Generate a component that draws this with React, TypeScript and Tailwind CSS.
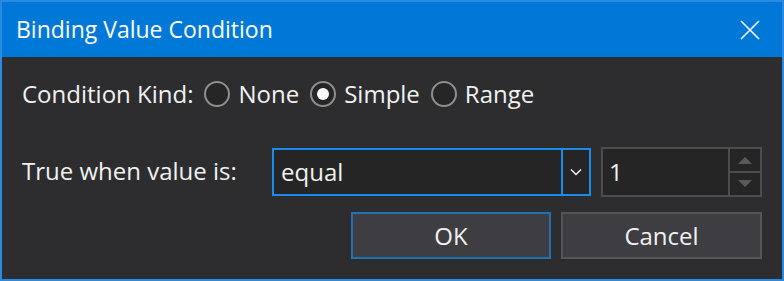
import { useState } from "react";

function Radio({ label, checked, onClick }: { label: string; checked: boolean; onClick: () => void }) {
  return (
    <button type="button" onClick={onClick} className="flex items-center gap-[8px] mr-[11px]">
      <span className="w-[26px] h-[26px] rounded-full border-2 border-[#8e8e8e] bg-[#262626] flex items-center justify-center">
        {checked && <span className="w-[12px] h-[12px] rounded-full bg-white" />}
      </span>
      <span>{label}</span>
    </button>
  );
}

export default function App() {
  const [kind, setKind] = useState("Simple");

  return (
    <div
      className="w-[784px] h-[281px] flex flex-col border-2 border-[#2a8ae0] bg-[#2d2d30] text-[#f1f1f1] overflow-hidden"
      style={{ fontFamily: '"Open Sans", "Noto Sans", sans-serif' }}
    >
      {/* Title bar */}
      <div className="h-[55px] shrink-0 bg-[#0078d7] flex items-center justify-between pl-[14px] pr-[22px]">
        <span className="text-[23px] text-white">Binding Value Condition</span>
        <svg width="20" height="20" viewBox="0 0 20 20" className="text-white">
          <path d="M1 1 L19 19 M19 1 L1 19" stroke="currentColor" strokeWidth="1.6" fill="none" />
        </svg>
      </div>

      {/* Body */}
      <div className="flex-1 flex flex-col px-[20px] pt-[14px] text-[24px]">
        <div className="h-[46px] flex items-center">
          <span className="mr-[11px]">Condition Kind:</span>
          {["None", "Simple", "Range"].map((k) => (
            <Radio key={k} label={k} checked={kind === k} onClick={() => setKind(k)} />
          ))}
        </div>

        <div className="mt-[30px] flex items-center gap-[10px]">
          <span className="w-[240px] -mt-[2px]">True when value is:</span>
          <div className="w-[319px] h-[48px] border-2 border-[#1a8cf0] bg-[#252526] flex">
            <span className="flex-1 flex items-center pl-[7px]">equal</span>
            <span className="w-[28px] border-l-2 border-[#1a8cf0] flex items-center justify-center">
              <svg width="12" height="8" viewBox="0 0 12 8">
                <path d="M1 1.5 L6 6.5 L11 1.5" stroke="#f1f1f1" strokeWidth="1.5" fill="none" />
              </svg>
            </span>
          </div>
          <div className="flex-1 h-[50px] border-2 border-[#4d4d4f] bg-[#252526] flex">
            <span className="flex-1 flex items-center pl-[6px]">1</span>
            <div className="w-[32px] border-l-2 border-[#4d4d4f] flex flex-col">
              <span className="flex-1 flex items-center justify-center border-b-2 border-[#4d4d4f]">
                <svg width="14" height="8" viewBox="0 0 14 8">
                  <path d="M0 8 L7 1 L14 8 Z" fill="#5a5a5c" />
                </svg>
              </span>
              <span className="flex-1 flex items-center justify-center">
                <svg width="14" height="8" viewBox="0 0 14 8">
                  <path d="M0 0 L7 7 L14 0 Z" fill="#5a5a5c" />
                </svg>
              </span>
            </div>
          </div>
        </div>

        <div className="mt-[15px] flex justify-end gap-[10px]">
          <button className="w-[200px] h-[47px] border-2 border-[#2171b5] bg-[#3e3e42]">OK</button>
          <button className="w-[201px] h-[47px] border-2 border-[#555557] bg-[#3e3e42]">Cancel</button>
        </div>
      </div>
    </div>
  );
}
